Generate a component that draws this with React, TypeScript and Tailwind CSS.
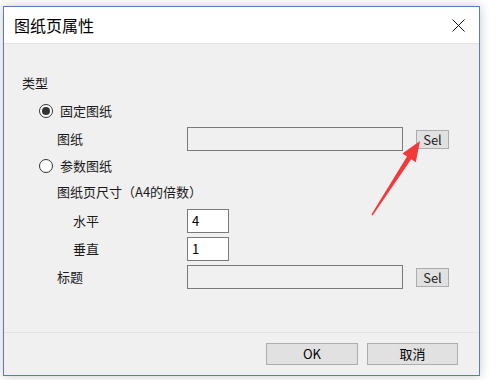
import React from 'react';

const font = { fontFamily: '"Noto Sans CJK SC", "Noto Sans", sans-serif' };

const Radio: React.FC<{ checked?: boolean; label: string }> = ({ checked, label }) => (
  <div className="flex items-center h-[16px] ml-[35px]">
    <span className="w-[14px] h-[14px] rounded-full border border-[#333] bg-white flex items-center justify-center">
      {checked && <span className="w-[8px] h-[8px] rounded-full bg-[#333]" />}
    </span>
    <span className="ml-[7px] text-[13px] leading-[16px]">{label}</span>
  </div>
);

const SelButton: React.FC = () => (
  <button className="ml-[13px] w-[33px] h-[19px] border border-[#adadad] bg-[#e1e1e1] text-[13px] leading-[17px] text-[#222]">
    Sel
  </button>
);

export default function App() {
  return (
    <div className="w-[496px] h-[380px] bg-white relative overflow-hidden text-[#1a1a1a]" style={font}>
      <div className="ml-[3px] mt-[6px] w-[477px] h-[370px] border border-[#5a7db5] flex flex-col shadow-[0_0_10px_rgba(0,0,0,0.22)]">
        <div className="h-[37px] bg-white border-b border-[#e3e3e3] flex items-center justify-between pl-[10px] pr-[14px] shrink-0">
          <span className="text-[16px] text-black">图纸页属性</span>
          <svg width="13" height="13" viewBox="0 0 13 13">
            <path d="M0.5 0.5 L12.5 12.5 M12.5 0.5 L0.5 12.5" stroke="#111" strokeWidth="1" />
          </svg>
        </div>

        <div className="flex-1 bg-[#f0f0f0] flex flex-col">
          <div className="mt-[31px] h-[16px] pl-[18px] text-[13px] leading-[16px]">类型</div>

          <div className="mt-[12px]">
            <Radio checked label="固定图纸" />
          </div>

          <div className="mt-[8px] h-[24px] flex items-center pl-[53px]">
            <span className="w-[130px] text-[13px]">图纸</span>
            <div className="w-[216px] h-[24px] border border-[#7a7a7a] bg-[#f0f0f0]" />
            <SelButton />
          </div>

          <div className="mt-[7px]">
            <Radio label="参数图纸" />
          </div>

          <div className="mt-[10px] h-[16px] pl-[53px] text-[13px] leading-[16px]">图纸页尺寸（A4的倍数）</div>

          <div className="mt-[9px] h-[24px] flex items-center pl-[69px]">
            <span className="w-[114px] text-[13px]">水平</span>
            <div className="w-[42px] h-[24px] border border-[#7a7a7a] bg-white text-[13px] leading-[22px] pl-[4px] text-black">4</div>
          </div>

          <div className="mt-[4px] h-[24px] flex items-center pl-[69px]">
            <span className="w-[114px] text-[13px]">垂直</span>
            <div className="w-[42px] h-[24px] border border-[#7a7a7a] bg-white text-[13px] leading-[22px] pl-[4px] text-black">1</div>
          </div>

          <div className="mt-[4px] h-[24px] flex items-center pl-[53px]">
            <span className="w-[130px] text-[13px]">标题</span>
            <div className="w-[216px] h-[24px] border border-[#7a7a7a] bg-[#f0f0f0]" />
            <SelButton />
          </div>
        </div>

        <div className="h-[43px] shrink-0 border-t border-[#e2e2e2] bg-[#f0f0f0] flex items-center justify-end pr-[21px] gap-[9px]">
          <button className="w-[92px] h-[22px] border border-[#adadad] bg-[#e1e1e1] text-[13px] text-black">OK</button>
          <button className="w-[91px] h-[22px] border border-[#adadad] bg-[#e1e1e1] text-[13px] text-black">取消</button>
        </div>
      </div>

      <svg className="absolute left-0 top-0 pointer-events-none" width="496" height="380">
        <polygon
          points="420,141 415.8,162.2 411.2,159.2 372.6,215.4 371.4,214.6 407,156.4 402.4,153.4"
          fill="#f23a3a"
        />
      </svg>
    </div>
  );
}
